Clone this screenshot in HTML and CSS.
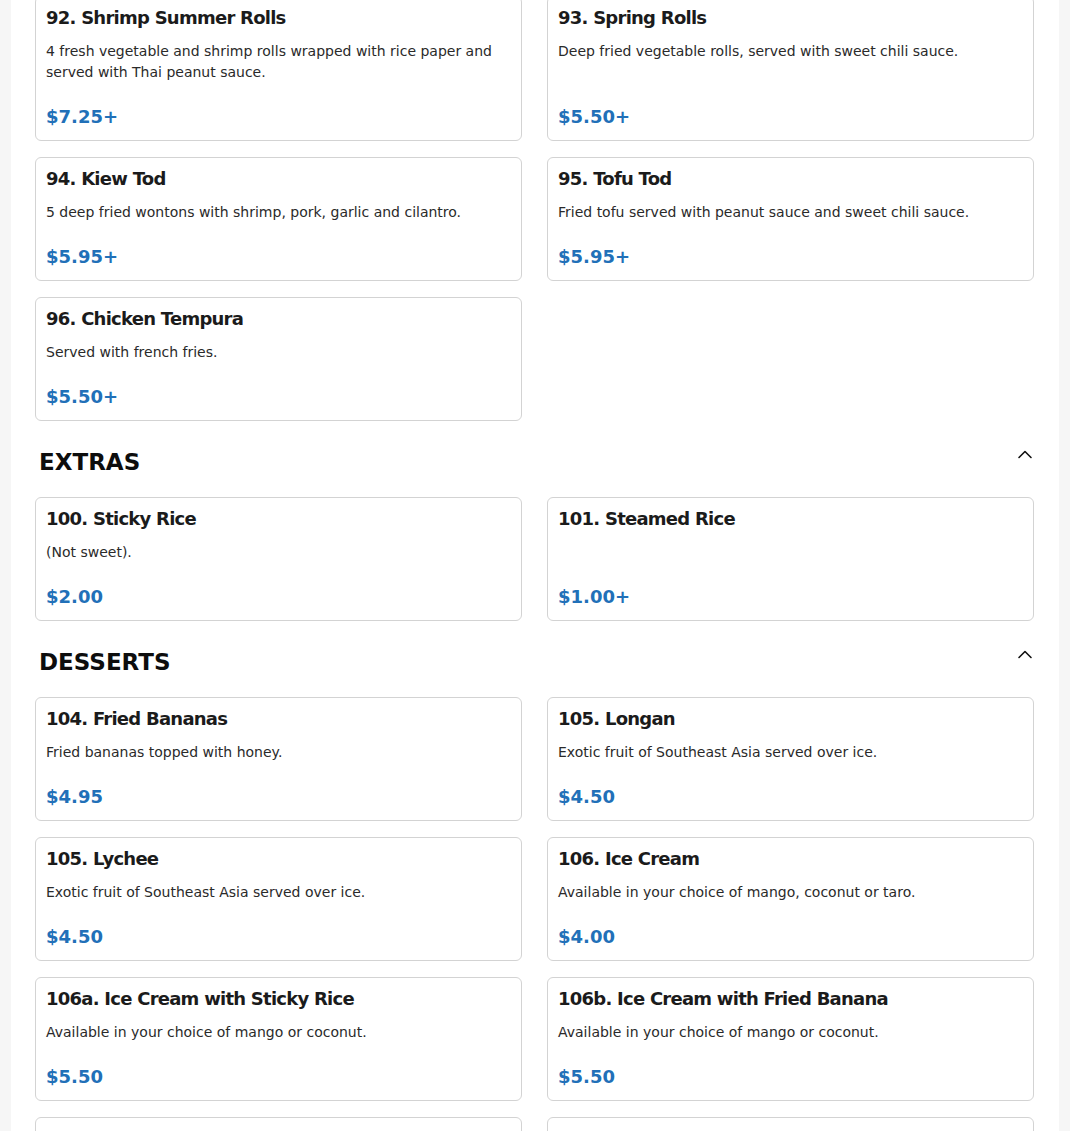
FILE: index.html
```html
<!DOCTYPE html>
<html lang="en">
<head>
<meta charset="utf-8">
<title>Menu</title>
<link rel="stylesheet" href="styles.css">
</head>
<body>
<main class="page">
  <section class="menu-section first">
    <div class="items">
      <article class="item">
        <h3 class="item-name">92. Shrimp Summer Rolls</h3>
        <p class="item-desc">4 fresh vegetable and shrimp rolls wrapped with rice paper and served with Thai peanut sauce.</p>
        <p class="item-price">$7.25+</p>
      </article>
      <article class="item">
        <h3 class="item-name">93. Spring Rolls</h3>
        <p class="item-desc">Deep fried vegetable rolls, served with sweet chili sauce.</p>
        <p class="item-price">$5.50+</p>
      </article>
      <article class="item">
        <h3 class="item-name">94. Kiew Tod</h3>
        <p class="item-desc">5 deep fried wontons with shrimp, pork, garlic and cilantro.</p>
        <p class="item-price">$5.95+</p>
      </article>
      <article class="item">
        <h3 class="item-name">95. Tofu Tod</h3>
        <p class="item-desc">Fried tofu served with peanut sauce and sweet chili sauce.</p>
        <p class="item-price">$5.95+</p>
      </article>
      <article class="item">
        <h3 class="item-name">96. Chicken Tempura</h3>
        <p class="item-desc">Served with french fries.</p>
        <p class="item-price">$5.50+</p>
      </article>
    </div>
  </section>

  <section class="menu-section">
    <header class="section-head">
      <h2 class="section-title">EXTRAS</h2>
      <svg class="chevron" width="16" height="16" viewBox="0 0 16 16" aria-hidden="true"><path d="M2 10.5 L8 4.5 L14 10.5" fill="none" stroke="#111" stroke-width="1.6" stroke-linecap="round" stroke-linejoin="round"/></svg>
    </header>
    <div class="items">
      <article class="item">
        <h3 class="item-name">100. Sticky Rice</h3>
        <p class="item-desc">(Not sweet).</p>
        <p class="item-price">$2.00</p>
      </article>
      <article class="item">
        <h3 class="item-name">101. Steamed Rice</h3>
        <p class="item-desc"></p>
        <p class="item-price">$1.00+</p>
      </article>
    </div>
  </section>

  <section class="menu-section">
    <header class="section-head">
      <h2 class="section-title">DESSERTS</h2>
      <svg class="chevron" width="16" height="16" viewBox="0 0 16 16" aria-hidden="true"><path d="M2 10.5 L8 4.5 L14 10.5" fill="none" stroke="#111" stroke-width="1.6" stroke-linecap="round" stroke-linejoin="round"/></svg>
    </header>
    <div class="items">
      <article class="item">
        <h3 class="item-name">104. Fried Bananas</h3>
        <p class="item-desc">Fried bananas topped with honey.</p>
        <p class="item-price">$4.95</p>
      </article>
      <article class="item">
        <h3 class="item-name">105. Longan</h3>
        <p class="item-desc">Exotic fruit of Southeast Asia served over ice.</p>
        <p class="item-price">$4.50</p>
      </article>
      <article class="item">
        <h3 class="item-name">105. Lychee</h3>
        <p class="item-desc">Exotic fruit of Southeast Asia served over ice.</p>
        <p class="item-price">$4.50</p>
      </article>
      <article class="item">
        <h3 class="item-name">106. Ice Cream</h3>
        <p class="item-desc">Available in your choice of mango, coconut or taro.</p>
        <p class="item-price">$4.00</p>
      </article>
      <article class="item">
        <h3 class="item-name">106a. Ice Cream with Sticky Rice</h3>
        <p class="item-desc">Available in your choice of mango or coconut.</p>
        <p class="item-price">$5.50</p>
      </article>
      <article class="item">
        <h3 class="item-name">106b. Ice Cream with Fried Banana</h3>
        <p class="item-desc">Available in your choice of mango or coconut.</p>
        <p class="item-price">$5.50</p>
      </article>
      <article class="item">
        <h3 class="item-name">107. Mango Custard with Sticky Rice</h3>
        <p class="item-desc">Seasonal.</p>
        <p class="item-price">$6.50</p>
      </article>
      <article class="item">
        <h3 class="item-name">108. Taro Custard with Sticky Rice</h3>
        <p class="item-desc">Seasonal.</p>
        <p class="item-price">$6.50</p>
      </article>
    </div>
  </section>
</main>
</body>
</html>
```

FILE: styles.css
```css
html, body {
  margin: 0;
  padding: 0;
}

body {
  background: #f6f6f6;
  font-family: "DejaVu Sans", Verdana, sans-serif;
  color: #1b1b1b;
}

.page {
  margin: -4px 11px 0;
  padding: 0 25px 40px 24px;
  background: #ffffff;
}

.menu-section {
  margin-top: 26px;
}

.menu-section.first {
  margin-top: 0;
}

.section-head {
  display: flex;
  justify-content: space-between;
  align-items: flex-start;
  padding: 0 1px 0 4px;
  margin-bottom: 20px;
}

.section-title {
  margin: 0;
  font-size: 23px;
  line-height: 30px;
  font-weight: bold;
  color: #0d0d0d;
}

.chevron {
  display: block;
  margin-top: 0;
}

.items {
  display: grid;
  grid-template-columns: 1fr 1fr;
  gap: 16px 25px;
}

.item {
  display: flex;
  flex-direction: column;
  border: 1px solid #d3d3d3;
  border-radius: 6px;
  padding: 10px;
  background: #ffffff;
}

.item-name {
  margin: 0 0 13px;
  font-size: 18px;
  line-height: 21px;
  font-weight: bold;
  letter-spacing: -0.75px;
  color: #1b1b1b;
}

.item-desc {
  flex: 1;
  margin: 0;
  min-height: 21px;
  font-size: 14px;
  line-height: 21px;
  color: #2a2a2a;
}

.item-price {
  margin: 20px 0 0;
  font-size: 18px;
  line-height: 27px;
  font-weight: bold;
  color: #2170b8;
}
```
